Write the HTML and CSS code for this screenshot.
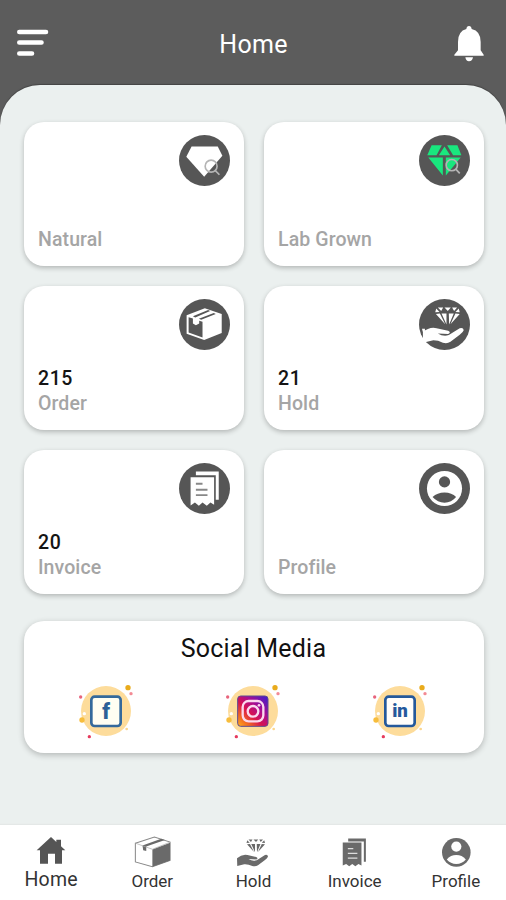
FILE: index.html
```html
<!DOCTYPE html>
<html lang="en">
<head>
<meta charset="utf-8">
<title>Home</title>
<link rel="stylesheet" href="styles.css">
</head>
<body>
<svg class="defs" aria-hidden="true">
  <defs>
    <linearGradient id="insta" x1="0" y1="1" x2="1" y2="0">
      <stop offset="0" stop-color="#ffb020"/><stop offset=".2" stop-color="#f36b22"/><stop offset=".42" stop-color="#d8124f"/><stop offset=".65" stop-color="#a80d91"/><stop offset="1" stop-color="#3a1fd0"/>
    </linearGradient>
    <symbol id="splash" viewBox="54 187 168 168">
      <circle cx="138" cy="271" r="75" fill="#fddc9b"/>
      <circle cx="204" cy="201" r="8" fill="#e9ab1c"/><circle cx="213" cy="219" r="5" fill="#f38a94"/>
      <circle cx="62" cy="229" r="5" fill="#e8647c"/><circle cx="66" cy="298" r="8" fill="#f7bd3c"/>
      <circle cx="88" cy="348" r="5" fill="#e63a5d"/><circle cx="200" cy="325" r="4" fill="#fbd68c"/>
      <circle cx="73" cy="279" r="5" fill="#fff"/>
    </symbol>
    <symbol id="hand" viewBox="0 0 130 116">
      <path d="M0 81Q20 63 42 68L77 76Q87 81 77 86L46 84Q62 94 79 89L112 68Q123 65 124 74Q122 80 112 88L84 109Q74 116 61 112Q45 104 29 105L1 112Z"/>
      <path d="M46 6H62L56 16ZM66 6H85L76 16ZM89 6H104L95 16ZM41 9L51 19L38 20ZM109 9L99 19L112 20ZM40 25L52 24L68 56ZM57 24H72V57ZM79 24H94L80 57ZM99 24L112 25L84 56Z"/>
    </symbol>
  </defs>
</svg>
<div class="app">
  <header class="header">
    <svg class="menu" viewBox="0 0 32 28"><path d="M2.3 3H29M2.3 13.5H24.5M2.3 24.5H15"/></svg>
    <h1>Home</h1>
    <svg class="bell" viewBox="0 0 90 108"><path d="M45 0Q52 0 53 9Q80 15 80 48V73L89 86V89H1V86L12 73V48Q12 15 37 9Q38 0 45 0ZM34 94H57Q55 106 45 106Q36 106 34 94Z"/></svg>
  </header>
  <main class="panel">
    <section class="cards">
      <article class="card">
        <svg class="badge" viewBox="27 30 154 154"><circle cx="104" cy="107" r="77" fill="#565656"/><path d="M65 65H144L158 93L103 156L49 96Z" fill="#fff"/><g fill="none" stroke="#b5b5b5" stroke-width="5"><circle cx="124" cy="124" r="18"/><path d="M136 137L149 150"/></g></svg>
        <p class="label">Natural</p>
      </article>
      <article class="card">
        <svg class="badge" viewBox="27 30 154 154"><circle cx="104" cy="107" r="77" fill="#565656"/><path d="M65 61H96L80 91H52ZM112 61H143L155 91H130ZM104 65L121 91H87ZM55 98H99V152ZM108 98H153L108 152Z" fill="#19e77e"/><g fill="none" stroke="#b5b5b5" stroke-width="5"><circle cx="126" cy="121" r="17"/><path d="M138 133L150 146"/></g></svg>
        <p class="label">Lab Grown</p>
      </article>
      <article class="card">
        <svg class="badge" viewBox="27 27 154 154"><circle cx="104" cy="104" r="77" fill="#565656"/><path d="M50 76L105 55L156 72V130L103 151L50 132Z" fill="#fff"/><path d="M56 82L69 86V101L78 106L88 101V93L98 96V143L56 128Z" fill="#565656"/><path d="M69 79L115 60L121 63L76 83ZM87 87L132 69L138 72L94 90Z" fill="#565656"/></svg>
        <p class="count">215</p><p class="label">Order</p>
      </article>
      <article class="card">
        <svg class="badge" viewBox="27 27 154 154"><circle cx="104" cy="104" r="77" fill="#565656"/><path d="M36 117H45V150Z" fill="#fff"/><use href="#hand" x="38" y="47" width="130" height="116" fill="#fff"/></svg>
        <p class="count">21</p><p class="label">Hold</p>
      </article>
      <article class="card">
        <svg class="badge" viewBox="27 38 154 154"><circle cx="104" cy="115" r="77" fill="#565656"/><path d="M78 64H147V149H138V75H78Z" fill="#fff"/><path d="M62 81H133V164L122 157L111 167L98 157L87 167L75 157L62 166Z" fill="#fff"/><path d="M78 101H98M78 119H113M78 135H113" stroke="#888" stroke-width="6"/></svg>
        <p class="count">20</p><p class="label">Invoice</p>
      </article>
      <article class="card">
        <svg class="badge" viewBox="27 38 154 154"><circle cx="104" cy="115" r="77" fill="#565656"/><circle cx="104" cy="115" r="53" fill="#fff"/><circle cx="104" cy="95" r="17" fill="#565656"/><path d="M68 141Q82 127 104 127T139 141Q125 158 104 158T68 141Z" fill="#565656"/></svg>
        <p class="label">Profile</p>
      </article>
    </section>
    <section class="social">
      <h2>Social Media</h2>
      <div class="links">
        <svg viewBox="54 187 168 168"><use href="#splash" x="54" y="187" width="168" height="168"/><rect x="94" y="228" width="88" height="88" rx="10" fill="#fffef2" stroke="#34699b" stroke-width="8"/><text x="138" y="294" class="f">f</text></svg>
        <svg viewBox="54 187 168 168"><use href="#splash" x="54" y="187" width="168" height="168"/><rect x="92" y="226" width="91" height="91" rx="9" fill="url(#insta)" stroke="#5c4a91" stroke-width="3"/><g fill="none" stroke="#fbd9ee" stroke-width="7"><rect x="107" y="241" width="62" height="61" rx="18"/><circle cx="138" cy="272" r="16"/></g><circle cx="156" cy="254" r="4" fill="#fbd9ee"/></svg>
        <svg viewBox="54 187 168 168"><use href="#splash" x="54" y="187" width="168" height="168"/><rect x="94" y="228" width="88" height="88" rx="10" fill="#fffefb" stroke="#24599b" stroke-width="8"/><text x="138" y="290" class="in">in</text></svg>
      </div>
    </section>
  </main>
  <nav class="nav">
    <a class="active"><svg viewBox="0 0 90 90"><path d="M45 0L61 15V8H75V28L88 40H78V80H57V50H36V80H12V40H2Z"/></svg>Home</a>
    <a><svg viewBox="0 0 110 94"><path d="M4 21L60 3L106 18V72L54 90L4 76Z" fill="#fff" stroke="#888" stroke-width="3"/><path d="M54 40L106 20V72L54 90Z"/><path d="M25 28L80 8L91 12L36 31V44L27 42Z"/><path d="M4 21L54 39L104 19" fill="none" stroke="#aaa" stroke-width="2"/></svg>Order</a>
    <a><svg class="hold" viewBox="0 0 130 116"><use href="#hand" width="130" height="116"/></svg>Hold</a>
    <a><svg viewBox="0 0 90 94"><path d="M27 7H79V76H73V16H27Z"/><path d="M11 19H66V87L57 82L48 89L39 82L30 89L21 82L11 87Z"/><path d="M26 37H42M26 51H54M26 65H54" stroke="#ddd" stroke-width="4"/></svg>Invoice</a>
    <a><svg viewBox="0 0 90 94"><circle cx="45" cy="48" r="42"/><circle cx="45" cy="31" r="15" fill="#fff"/><path d="M17 69Q28 56 45 56T73 69Q62 82 45 82T17 69Z" fill="#fff"/></svg>Profile</a>
  </nav>
</div>
</body>
</html>
```

FILE: styles.css
```css
* { box-sizing: border-box; }
body, h1, h2, p { margin: 0; }
body { font-family: Roboto, "Liberation Sans", sans-serif; background: #5c5c5c; }
.defs { position: absolute; width: 0; height: 0; }
.app { height: 900px; display: flex; flex-direction: column; overflow: hidden; }
.header { height: 85px; padding: 3px 22px 0 16px; display: grid; grid-template-columns: 60px 1fr 54px; align-items: center; color: #fff; }
.header h1 { font-size: 25px; font-weight: 400; text-align: center; letter-spacing: .3px; padding-left: 1px; }
.menu { width: 32px; height: 28px; margin: 0 0 3px 1px; fill: none; stroke: #fff; stroke-width: 4.6; stroke-linecap: round; }
.bell { width: 30px; height: 36px; justify-self: end; fill: #fff; }
.panel { flex: 1; background: #ebf0ef; border-radius: 40px 40px 0 0; padding: 37px 22px 0 24px; box-shadow: 0 -1px 1px #444; }
.cards { display: grid; grid-template-columns: 220px 220px; grid-auto-rows: 144px; gap: 20px; }
.card { display: flex; flex-direction: column; padding: 13px 14px 14px; border-radius: 20px; background: #fff; box-shadow: 0 2px 5px rgba(0,0,0,.24); }
.badge { width: 51px; height: 51px; align-self: flex-end; margin-bottom: auto; }
.label, .count { font-size: 19.5px; font-weight: 500; line-height: 25px; }
.label { color: #a5a5a5; letter-spacing: .1px; }
.count { color: #151515; letter-spacing: .6px; }
.social { width: 460px; height: 132px; margin-top: 27px; padding: 12px 10px 0 8px; border-radius: 20px; background: #fff; box-shadow: 0 2px 6px rgba(0,0,0,.24); }
.social h2 { font-size: 25px; line-height: 31px; font-weight: 400; text-align: center; color: #111; letter-spacing: .2px; padding-left: 1px; }
.links { display: grid; grid-template-columns: repeat(3, 1fr); justify-items: center; margin-top: 19px; }
.links svg { width: 56px; height: 56px; }
.links text { text-anchor: middle; font-weight: 900; }
.f { font-size: 64px; fill: #2c6197; }
.in { font-size: 56px; fill: #24599b; }
.nav { height: 75px; display: grid; grid-template-columns: repeat(5, 1fr); background: #fff; box-shadow: 0 -1px 1px #e4e8e7; }
.nav a { display: flex; flex-direction: column; align-items: center; padding: 11px 0 0 1px; font-size: 17px; line-height: 20px; color: #333; letter-spacing: 0; }
.nav svg { height: 32px; margin-bottom: 3px; fill: #6a6a6a; }
.nav .hold { height: 29px; margin: 2px 0 4px; }
.nav .active { font-size: 19.5px; color: #333; letter-spacing: .2px; }
.nav .active svg { height: 30px; margin: 1px 0 3px; fill: #555; }
```
